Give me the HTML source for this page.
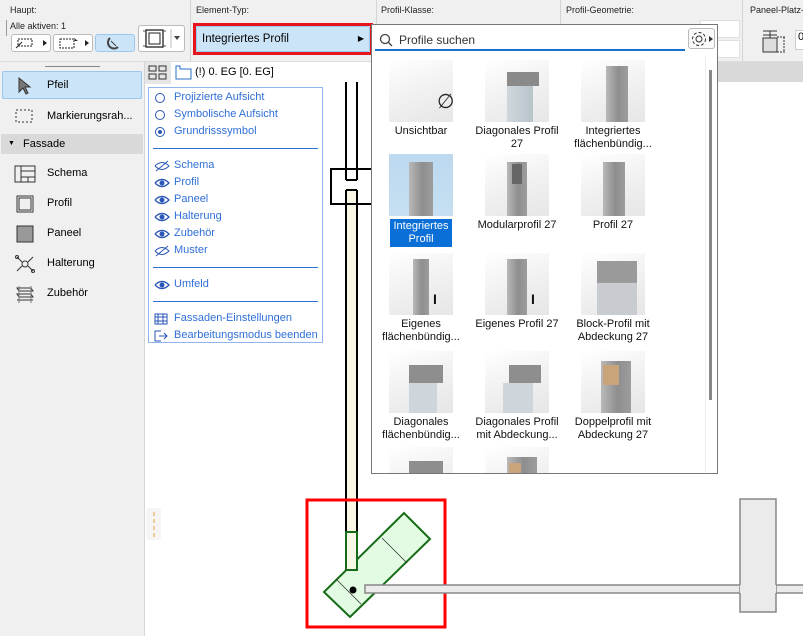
<!DOCTYPE html>
<html><head><meta charset="utf-8"><style>
*{box-sizing:border-box;margin:0;padding:0}
body{width:803px;height:636px;overflow:hidden;position:relative;background:#fff;font-family:"Liberation Sans",sans-serif;font-size:11px;color:#000}
.a{position:absolute}
.lbl{font-size:9px;color:#222;white-space:nowrap}
.tb{background:#f0f0f0}
.menu div{height:17px;line-height:17px;padding-left:25px;position:relative;color:#2f6fd8}
.menu svg{position:absolute;left:5px;top:3px}
.sep{border-top:1px solid #2f6fd8;margin:8px 4px}
.tile{position:absolute;width:96px;text-align:center;font-size:11px;line-height:13px;color:#111}
.th{width:64px;height:62px;margin:0 auto 3px;position:relative;background:linear-gradient(160deg,#fff 0%,#f1f1f1 50%,#e6e6e6 100%)}
.pr{position:absolute;background:linear-gradient(90deg,#b9b9b9,#8e8e8e 55%,#9d9d9d)}
.side div.it{height:30px;line-height:30px;padding-left:47px;position:relative;font-size:11px}
.side svg{position:absolute;left:14px;top:7px}
</style></head><body>

<!-- top toolbar -->
<div class="a tb" style="left:0;top:0;width:803px;height:62px;border-bottom:1px solid #ddd"></div>
<div class="a" style="left:190px;top:0;width:1px;height:62px;background:#d4d4d4"></div>
<div class="a" style="left:376px;top:0;width:1px;height:62px;background:#d4d4d4"></div>
<div class="a" style="left:560px;top:0;width:1px;height:62px;background:#d4d4d4"></div>
<div class="a" style="left:742px;top:0;width:1px;height:62px;background:#d4d4d4"></div>
<div class="a lbl" style="left:10px;top:5px">Haupt:</div>
<div class="a lbl" style="left:196px;top:5px">Element-Typ:</div>
<div class="a lbl" style="left:381px;top:5px">Profil-Klasse:</div>
<div class="a lbl" style="left:566px;top:5px">Profil-Geometrie:</div>
<div class="a lbl" style="left:750px;top:5px">Paneel-Platz-</div>
<div class="a lbl" style="left:10px;top:21px">Alle aktiven: 1</div>
<div class="a" style="left:6px;top:20px;width:1px;height:16px;background:#999"></div>
<div class="a" style="left:11px;top:34px;width:40px;height:18px;border:1px solid #bbb;border-radius:3px;background:#fff"><svg width="38" height="16"><rect x="6" y="4" width="14" height="7" fill="none" stroke="#222" stroke-dasharray="2 1"/><path d="M4 13l6-6" stroke="#222"/><path d="M31 5l4 3-4 3z" fill="#222"/></svg></div>
<div class="a" style="left:53px;top:34px;width:40px;height:18px;border:1px solid #bbb;border-radius:3px;background:#fff"><svg width="38" height="16"><rect x="6" y="4" width="14" height="9" fill="none" stroke="#222" stroke-dasharray="2 1"/><path d="M20 3l4 3-3 0z" fill="#222"/><path d="M31 5l4 3-4 3z" fill="#222"/></svg></div>
<div class="a" style="left:95px;top:34px;width:40px;height:18px;border:1px solid #9cc6ee;border-radius:3px;background:#cce4f7"><svg width="38" height="16"><path d="M14 3a6 6 0 1 0 8 9" fill="none" stroke="#444" stroke-width="2"/><path d="M15 6l5 5" stroke="#444"/></svg></div>
<div class="a" style="left:138px;top:25px;width:47px;height:27px;border:1px solid #bbb;border-radius:3px;background:#fff"><svg width="45" height="25"><rect x="7" y="4" width="17" height="17" fill="none" stroke="#222" stroke-width="1.3"/><rect x="10" y="7" width="11" height="11" fill="none" stroke="#222"/><path d="M4 5h3M4 20h3M24 5h3M24 20h3" stroke="#555"/><path d="M32 3v19" stroke="#bbb"/><path d="M35 10h6l-3 4z" fill="#444"/></svg></div>

<!-- element type -->
<div class="a" style="left:193px;top:23px;width:180px;height:32px;border:3px solid #e8141c"></div>
<div class="a" style="left:196px;top:26px;width:174px;height:26px;background:#cce4f7;border:1px solid #99c9ef;border-radius:2px;font-size:11.5px;line-height:24px;padding-left:5px">Integriertes Profil<span style="position:absolute;right:5px;top:0;font-size:8px">▶</span></div>

<!-- geometry fields -->
<div class="a" style="left:700px;top:20px;width:40px;height:18px;background:#fff;border:1px solid #e0e0e0"></div>
<div class="a" style="left:700px;top:40px;width:40px;height:18px;background:#fff;border:1px solid #e0e0e0"></div>
<svg class="a" style="left:760px;top:28px" width="30" height="26"><rect x="3" y="10" width="14" height="14" fill="#ddd" stroke="#333"/><path d="M3 3h14M10 3v7M3 7h14" stroke="#333"/><path d="M17 9h8M17 24h8M24 9v15" stroke="#333" stroke-dasharray="2 1"/></svg>
<div class="a" style="left:795px;top:30px;width:10px;height:20px;background:#fff;border:1px solid #ccc;font-size:11px;padding-left:2px">0</div>

<!-- left panel -->
<div class="a tb side" style="left:0;top:62px;width:145px;height:574px;border-right:1px solid #d6d6d6">
 <div class="a" style="left:45px;top:4px;width:55px;height:1px;background:#888"></div>
 <div class="it" style="margin-top:9px;background:#cce4f7;border:1px solid #9cc6ee;border-radius:2px;height:28px;line-height:26px;margin-left:2px;margin-right:2px;padding-left:44px"><svg width="20" height="20" style="left:12px;top:4px"><path d="M4 2l0 14 4-4 3 6 2-1-3-6 5 0z" fill="#777" stroke="#333"/></svg>Pfeil</div>
 <div class="it" style="margin-top:2px"><svg width="20" height="16"><rect x="2" y="2" width="16" height="12" fill="none" stroke="#333" stroke-dasharray="2 2"/></svg>Markierungsrah...</div>
 <div style="height:20px;line-height:20px;background:#d9d9d9;margin:3px 1px 4px;padding-left:22px;position:relative;font-size:11px"><span style="position:absolute;left:7px;top:0;font-size:7px">▼</span>Fassade</div>
 <div class="it"><svg width="22" height="18"><rect x="1" y="1" width="20" height="16" fill="none" stroke="#333"/><path d="M7 1v16M7 6h14M7 12h14M14 12v5" stroke="#333"/></svg>Schema</div>
 <div class="it"><svg width="22" height="18"><rect x="3" y="1" width="16" height="16" fill="none" stroke="#333"/><rect x="5" y="3" width="12" height="12" fill="none" stroke="#333"/></svg>Profil</div>
 <div class="it"><svg width="22" height="18"><rect x="3" y="1" width="16" height="16" fill="#999" stroke="#333"/></svg>Paneel</div>
 <div class="it"><svg width="22" height="18"><circle cx="11" cy="9" r="3" fill="none" stroke="#333"/><path d="M3 2l5 5M19 2l-5 5M3 16l5-5M19 16l-5-5" stroke="#333"/><circle cx="3" cy="2" r="1.5" fill="none" stroke="#333"/><circle cx="19" cy="16" r="1.5" fill="none" stroke="#333"/></svg>Halterung</div>
 <div class="it"><svg width="22" height="18"><path d="M3 3h14l2 3H5zM3 9h14l2 3H5zM3 15h16" fill="none" stroke="#333"/><path d="M5 1v17M17 1v17" stroke="#777"/></svg>Zubehör</div>
</div>

<!-- canvas header -->
<div class="a" style="left:145px;top:62px;width:26px;height:22px;background:#e6e6e6"><svg width="26" height="22"><rect x="4" y="4" width="7" height="5" fill="none" stroke="#333"/><rect x="14" y="4" width="7" height="5" fill="none" stroke="#333"/><rect x="4" y="12" width="7" height="5" fill="none" stroke="#333"/><rect x="14" y="12" width="7" height="5" fill="none" stroke="#333"/></svg></div>
<svg class="a" style="left:175px;top:64px" width="20" height="16"><path d="M1 2h4v3h11v10H1z" fill="none" stroke="#2870c8"/></svg>
<div class="a" style="left:195px;top:66px;font-size:11px">(!) 0. EG [0. EG]</div>
<div class="a" style="left:717px;top:62px;width:86px;height:20px;background:#d9d9d9"></div>

<!-- canvas drawing -->
<svg class="a" style="left:145px;top:82px" width="658" height="554">
 <rect x="201" y="108" width="11" height="395" fill="#f8f6e4"/>
 <path d="M201 0v98M212 0v98M201 108v412M212 108v412" stroke="#000" stroke-width="2"/>
 <path d="M201 98h11M201 108h11" stroke="#000" stroke-width="2"/>
 <path d="M230 87h-44v35h44" fill="none" stroke="#000" stroke-width="2"/>
 <rect x="162" y="418" width="138" height="127" fill="none" stroke="#f00" stroke-width="3"/>
 <polygon points="179,510 205,535 285,457 259,431" fill="#e2fbe2" stroke="#166c16" stroke-width="2"/>
 <path d="M191 497l25 25M237 456l25 25" stroke="#333" stroke-width="0.8"/>
 <rect x="201" y="450" width="11" height="38" fill="#f8f6e4" stroke="#166c16" stroke-width="2"/>
 <circle cx="208" cy="508" r="3.5" fill="#000"/>
 <rect x="220" y="503" width="388" height="8" fill="#ebebeb" stroke="#888" stroke-width="1.5"/>
 <rect x="620" y="503" width="40" height="8" fill="#ebebeb" stroke="#888" stroke-width="1.5"/>
 <rect x="595" y="417" width="36" height="113" fill="#ebebeb" stroke="#888" stroke-width="1.5"/>
 <rect x="595" y="503" width="36" height="8" fill="#ebebeb" stroke="none"/>
 <rect x="1" y="426" width="15" height="32" rx="3" fill="#f5f5f5"/>
 <path d="M9 430v26" stroke="#f0a040" stroke-dasharray="4 3"/>
</svg>

<!-- view menu -->
<div class="a menu" style="left:148px;top:87px;width:175px;height:256px;border:1px solid #8fb4f0;background:#fff;padding-top:1px;font-size:11px">
 <div><svg width="12" height="12"><circle cx="6" cy="6" r="4.5" fill="none" stroke="#2a56b8"/></svg>Projizierte Aufsicht</div>
 <div><svg width="12" height="12"><circle cx="6" cy="6" r="4.5" fill="none" stroke="#2a56b8"/></svg>Symbolische Aufsicht</div>
 <div><svg width="12" height="12"><circle cx="6" cy="6" r="4.5" fill="none" stroke="#2a56b8"/><circle cx="6" cy="6" r="2" fill="#2a56b8"/></svg>Grundrisssymbol</div>
 <p class="sep"></p>
 <div><svg width="16" height="12"><path d="M1 6q7-7 14 0q-7 7-14 0M2 11l12-10" fill="none" stroke="#2a56b8"/></svg>Schema</div>
 <div><svg width="16" height="12"><path d="M1 6q7-7 14 0q-7 7-14 0" fill="none" stroke="#2a56b8" stroke-width="1.3"/><circle cx="8" cy="6" r="2.5" fill="#2a56b8"/></svg>Profil</div>
 <div><svg width="16" height="12"><path d="M1 6q7-7 14 0q-7 7-14 0" fill="none" stroke="#2a56b8" stroke-width="1.3"/><circle cx="8" cy="6" r="2.5" fill="#2a56b8"/></svg>Paneel</div>
 <div><svg width="16" height="12"><path d="M1 6q7-7 14 0q-7 7-14 0" fill="none" stroke="#2a56b8" stroke-width="1.3"/><circle cx="8" cy="6" r="2.5" fill="#2a56b8"/></svg>Halterung</div>
 <div><svg width="16" height="12"><path d="M1 6q7-7 14 0q-7 7-14 0" fill="none" stroke="#2a56b8" stroke-width="1.3"/><circle cx="8" cy="6" r="2.5" fill="#2a56b8"/></svg>Zubehör</div>
 <div><svg width="16" height="12"><path d="M1 6q7-7 14 0q-7 7-14 0M2 11l12-10" fill="none" stroke="#2a56b8"/></svg>Muster</div>
 <p class="sep"></p>
 <div><svg width="16" height="12"><path d="M1 6q7-7 14 0q-7 7-14 0" fill="none" stroke="#2a56b8" stroke-width="1.3"/><circle cx="8" cy="6" r="2.5" fill="#2a56b8"/></svg>Umfeld</div>
 <p class="sep"></p>
 <div><svg width="14" height="12"><rect x="1" y="1" width="12" height="10" fill="none" stroke="#2a56b8"/><path d="M4 1v10M9 1v10M1 4h12M1 8h12" stroke="#2a56b8"/></svg>Fassaden-Einstellungen</div>
 <div><svg width="14" height="12"><path d="M7 1H1v10h6M5 6h8M10 3l3 3-3 3" fill="none" stroke="#2a56b8"/></svg>Bearbeitungsmodus beenden</div>
</div>

<!-- popup -->
<div class="a" style="left:371px;top:24px;width:347px;height:450px;background:#fff;border:1px solid #777;overflow:hidden">
 <div class="a" style="left:3px;top:4px;width:310px;height:22px;border-bottom:2px solid #1a6fc8"><svg class="a" style="left:4px;top:4px" width="14" height="14"><circle cx="6" cy="6" r="4.5" fill="none" stroke="#444" stroke-width="1.3"/><path d="M9 9l4 4" stroke="#444" stroke-width="1.3"/></svg><span class="a" style="left:24px;top:4px;font-size:12px;color:#333">Profile suchen</span></div>
 <div class="a" style="left:316px;top:3px;width:27px;height:21px;border:1px solid #bbb;border-radius:3px;background:#fafafa"><svg width="27" height="21"><circle cx="10" cy="10" r="3" fill="none" stroke="#333"/><circle cx="10" cy="10" r="6.5" fill="none" stroke="#333" stroke-dasharray="3 2"/><path d="M20 7l4 3-4 3z" fill="#333"/></svg></div>
 <div class="a" style="left:337px;top:45px;width:3px;height:330px;background:#888"></div>
 <div class="a" style="left:333px;top:30px;width:1px;height:420px;background:#eee"></div>

 <div class="tile" style="left:1px;top:35px"><div class="th"><div class="a" style="left:48px;top:36px;font-size:20px;color:#222">∅</div></div>Unsichtbar</div>
 <div class="tile" style="left:97px;top:35px"><div class="th"><div class="pr" style="left:22px;top:16px;width:26px;height:46px;background:linear-gradient(90deg,#cfd7dc,#b8c3ca)"></div><div class="pr" style="left:22px;top:12px;width:32px;height:14px;background:#8a8a8a"></div></div>Diagonales Profil<br>27</div>
 <div class="tile" style="left:193px;top:35px"><div class="th"><div class="pr" style="left:25px;top:6px;width:22px;height:56px"></div></div>Integriertes<br>flächenbündig...</div>

 <div class="tile" style="left:1px;top:129px"><div class="th" style="background:linear-gradient(#bcd9f0,#c6dff1)"><div class="pr" style="left:20px;top:8px;width:24px;height:54px"></div></div><span style="background:#0a6fd6;color:#fff;padding:1px 2px;display:inline-block;width:62px">Integriertes<br>Profil</span></div>
 <div class="tile" style="left:97px;top:129px"><div class="th"><div class="pr" style="left:22px;top:8px;width:20px;height:54px"></div><div class="a" style="left:27px;top:10px;width:10px;height:20px;background:#666"></div></div>Modularprofil 27</div>
 <div class="tile" style="left:193px;top:129px"><div class="th"><div class="pr" style="left:22px;top:8px;width:22px;height:54px"></div></div>Profil 27</div>

 <div class="tile" style="left:1px;top:228px"><div class="th"><div class="pr" style="left:24px;top:6px;width:16px;height:56px"></div><div class="a" style="left:44px;top:40px;font-size:14px;font-weight:bold">I</div></div>Eigenes<br>flächenbündig...</div>
 <div class="tile" style="left:97px;top:228px"><div class="th"><div class="pr" style="left:22px;top:6px;width:20px;height:56px"></div><div class="a" style="left:46px;top:40px;font-size:14px;font-weight:bold">I</div></div>Eigenes Profil 27</div>
 <div class="tile" style="left:193px;top:228px"><div class="th"><div class="pr" style="left:16px;top:8px;width:40px;height:54px;background:linear-gradient(#9a9a9a 40%,#c8ccd0 41%)"></div></div>Block-Profil mit<br>Abdeckung 27</div>

 <div class="tile" style="left:1px;top:326px"><div class="th"><div class="pr" style="left:20px;top:14px;width:34px;height:18px;background:#8e8e8e"></div><div class="a" style="left:20px;top:32px;width:28px;height:30px;background:#cfd6db"></div></div>Diagonales<br>flächenbündig...</div>
 <div class="tile" style="left:97px;top:326px"><div class="th"><div class="pr" style="left:24px;top:14px;width:32px;height:18px;background:#8e8e8e"></div><div class="a" style="left:18px;top:32px;width:30px;height:30px;background:#cfd6db"></div></div>Diagonales Profil<br>mit Abdeckung...</div>
 <div class="tile" style="left:193px;top:326px"><div class="th"><div class="pr" style="left:20px;top:10px;width:30px;height:52px"></div><div class="a" style="left:22px;top:14px;width:16px;height:20px;background:#c9a47a"></div></div>Doppelprofil mit<br>Abdeckung 27</div>

 <div class="tile" style="left:1px;top:422px"><div class="th"><div class="pr" style="left:20px;top:14px;width:34px;height:18px;background:#8e8e8e"></div></div></div>
 <div class="tile" style="left:97px;top:422px"><div class="th"><div class="pr" style="left:22px;top:10px;width:30px;height:30px"></div><div class="a" style="left:24px;top:16px;width:12px;height:14px;background:#c9a47a"></div></div></div>
</div>
</body></html>
